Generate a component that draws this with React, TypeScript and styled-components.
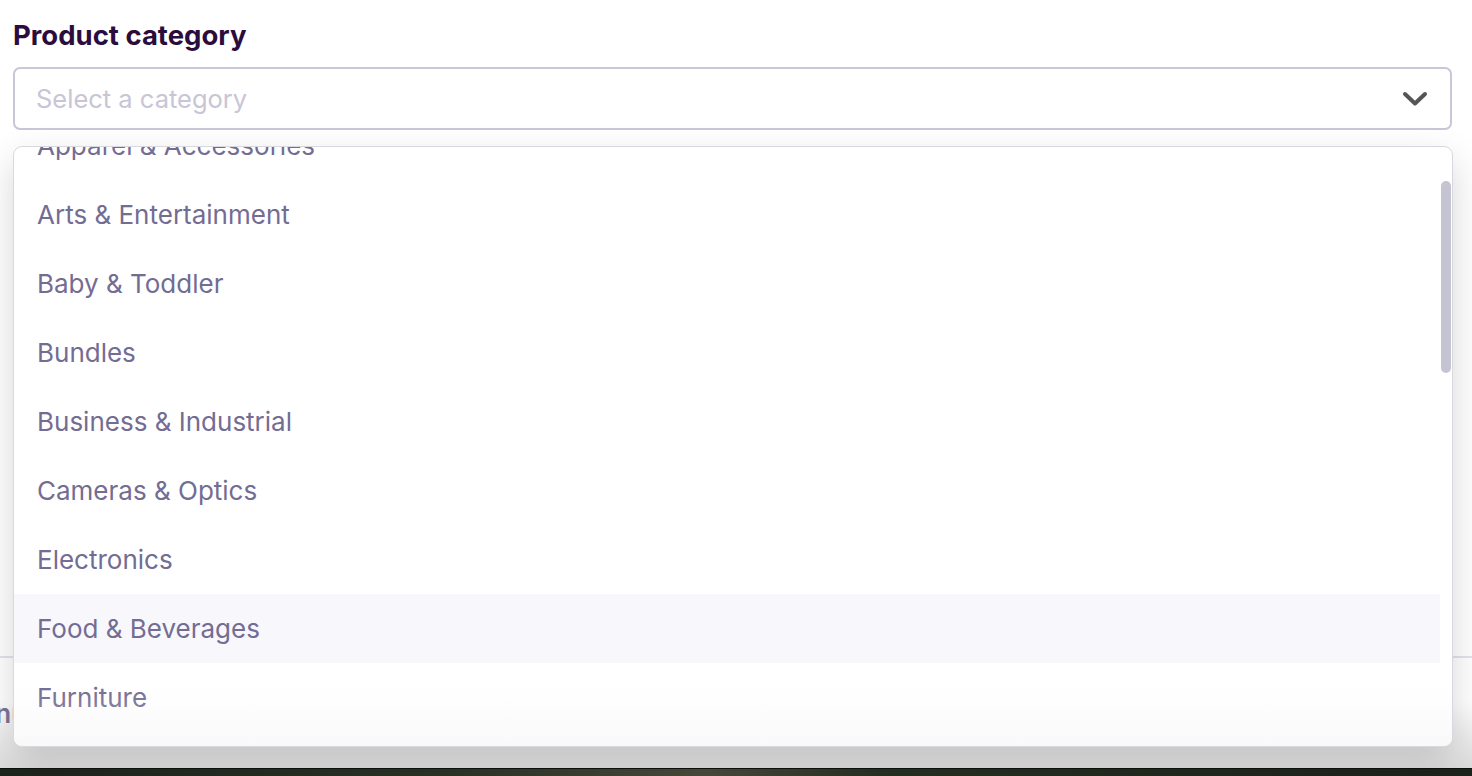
import { useEffect, useRef, useState } from 'react';
import styled, { createGlobalStyle } from 'styled-components';

const GlobalStyle = createGlobalStyle`
  html, body {
    margin: 0;
    padding: 0;
    background: #ffffff;
    font-family: Inter, "Noto Sans", "Liberation Sans", sans-serif;
    overflow: hidden;
  }
  * {
    box-sizing: border-box;
  }
`;

const categories = [
  'Animals & Pet Supplies',
  'Apparel & Accessories',
  'Arts & Entertainment',
  'Baby & Toddler',
  'Bundles',
  'Business & Industrial',
  'Cameras & Optics',
  'Electronics',
  'Food & Beverages',
  'Furniture',
  'Gift Cards',
  'Hardware',
  'Health & Beauty',
  'Home & Garden',
  'Luggage & Bags',
  'Mature',
  'Media',
  'Office Supplies',
  'Religious & Ceremonial',
  'Services',
  'Software',
  'Sporting Goods',
  'Toys & Games',
  'Vehicles & Parts',
  'Other',
  'Uncategorized',
  'Miscellaneous',
];

const ROW_HEIGHT = 69;
const INITIAL_SCROLL = 105;

const Page = styled.div`
  position: relative;
  height: 776px;
  display: flex;
  flex-direction: column;
`;

const Content = styled.div`
  flex: 1;
  padding: 19px 20px 0 13px;
  display: flex;
  flex-direction: column;
`;

const Field = styled.div`
  position: relative;
  display: flex;
  flex-direction: column;
  gap: 15px;
  z-index: 2;
`;

const Label = styled.label`
  font-size: 27.5px;
  font-weight: 700;
  line-height: 33px;
  color: #2a0d3e;
`;

const SelectBox = styled.div`
  height: 63px;
  border: 2px solid #c9c6d6;
  border-radius: 7px;
  display: flex;
  align-items: center;
  justify-content: space-between;
  padding: 0 22px 0 21px;
  background: #ffffff;
`;

const Placeholder = styled.span`
  font-size: 25.5px;
  color: #c8c5d6;
`;

const Dropdown = styled.div`
  position: absolute;
  left: 0;
  right: -1px;
  top: calc(100% + 16px);
  height: 601px;
  display: flex;
  background: #ffffff;
  border: 1.5px solid #d9d8de;
  border-radius: 9px;
  box-shadow: 0 14px 36px rgba(0, 0, 0, 0.16);
  overflow: hidden;
`;

const OptionList = styled.ul`
  flex: 1;
  list-style: none;
  margin: 0;
  padding: 0;
  height: 100%;
  overflow-y: hidden;
`;

const Option = styled.li<{ $active?: boolean }>`
  height: ${ROW_HEIGHT}px;
  display: flex;
  align-items: center;
  padding-left: 23px;
  font-size: 26px;
  color: #736c93;
  background: ${({ $active }) => ($active ? '#f7f7fc' : 'transparent')};
`;

const ScrollTrack = styled.div`
  width: 12px;
  padding: 0 1px;
  display: flex;
  flex-direction: column;
`;

const ScrollThumb = styled.div`
  width: 10px;
  border-radius: 5px;
  background: #c5c4d3;
`;

const Fade = styled.div`
  position: absolute;
  left: 0;
  right: 0;
  bottom: 0;
  height: 60px;
  pointer-events: none;
  background: linear-gradient(
    to bottom,
    rgba(255, 255, 255, 0),
    rgba(240, 240, 240, 0.4)
  );
`;

const Section = styled.div`
  margin: 526px -20px 0 -13px;
  border-top: 2px solid #e4e3ec;
  padding-top: 40px;
  flex: 1;
  background: linear-gradient(to bottom, #ffffff 40%, #dcdcdc);
`;

const SectionTitle = styled.span`
  display: inline-block;
  margin-left: -44px;
  font-size: 26px;
  font-weight: 600;
  color: #7a7496;
`;

const PhotoStrip = styled.div`
  height: 8px;
  background: linear-gradient(
    to right,
    #1d231d,
    #2a3326 30%,
    #4a4a3c 48%,
    #263022 60%,
    #1c221c
  );
  border-top: 1px solid #0e120e;
`;

const Chevron = () => (
  <svg width="26" height="16" viewBox="0 0 26 16" fill="none">
    <polyline
      points="3,3 13,12.5 23,3"
      stroke="#555555"
      strokeWidth="4"
      strokeLinecap="round"
      strokeLinejoin="round"
    />
  </svg>
);

export default function App() {
  const listRef = useRef<HTMLUListElement>(null);
  const [thumb, setThumb] = useState({ top: 35, height: 190 });

  useEffect(() => {
    const list = listRef.current;
    if (!list) return;
    list.scrollTop = INITIAL_SCROLL;
    const view = list.clientHeight;
    const total = list.scrollHeight;
    setThumb({
      top: (list.scrollTop / total) * view,
      height: (view / total) * view,
    });
  }, []);

  return (
    <Page>
      <GlobalStyle />
      <Content>
        <Field>
          <Label>Product category</Label>
          <SelectBox>
            <Placeholder>Select a category</Placeholder>
            <Chevron />
          </SelectBox>
          <Dropdown>
            <OptionList ref={listRef}>
              {categories.map((name) => (
                <Option key={name} $active={name === 'Food & Beverages'}>
                  {name}
                </Option>
              ))}
            </OptionList>
            <ScrollTrack>
              <ScrollThumb
                style={{ marginTop: thumb.top, height: thumb.height }}
              />
            </ScrollTrack>
            <Fade />
          </Dropdown>
        </Field>
        <Section>
          <SectionTitle>Menu</SectionTitle>
        </Section>
      </Content>
      <PhotoStrip />
    </Page>
  );
}
